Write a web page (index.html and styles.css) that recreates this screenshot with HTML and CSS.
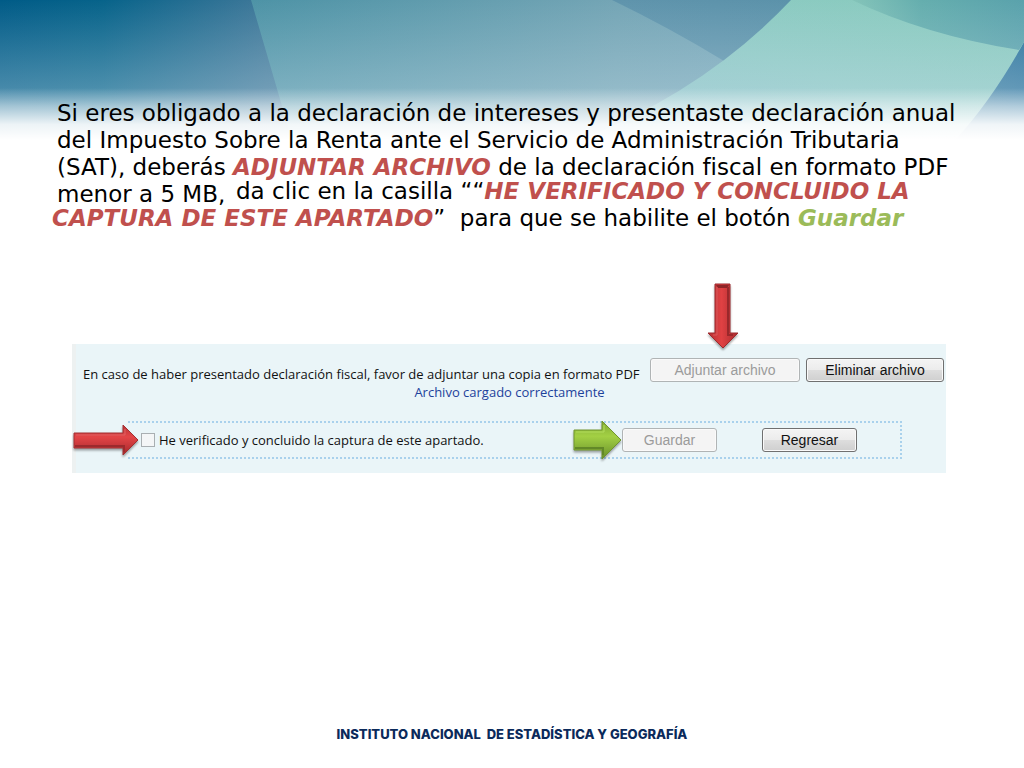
FILE: index.html
```
<!DOCTYPE html>
<html lang="es">
<head>
    <meta charset="UTF-8">
    <meta name="viewport" content="width=device-width, initial-scale=1.0">
    <title>Declaración de intereses - Adjuntar archivo</title>
    <link rel="stylesheet" href="styles.css">
</head>
<body>
    <!-- Header background -->
    <svg class="banner" viewBox="0 0 1024 140" preserveAspectRatio="none" aria-hidden="true">
        <defs>
            <linearGradient id="base" x1="0" y1="0" x2="1" y2="0">
                <stop offset="0" stop-color="#005b87"/>
                <stop offset="0.1" stop-color="#07638a"/>
                <stop offset="0.26" stop-color="#3f7899"/>
                <stop offset="0.6" stop-color="#5f94ac"/>
                <stop offset="0.8" stop-color="#5b92aa"/>
                <stop offset="1" stop-color="#28719b"/>
            </linearGradient>
            <linearGradient id="middle" x1="0" y1="0" x2="1" y2="0">
                <stop offset="0" stop-color="#4d93a6"/>
                <stop offset="0.6" stop-color="#74a5b5"/>
                <stop offset="1" stop-color="#7ba9bc"/>
            </linearGradient>
            <linearGradient id="green" x1="0" y1="1" x2="1" y2="0">
                <stop offset="0" stop-color="#8bbfca"/>
                <stop offset="0.5" stop-color="#8dcac4"/>
                <stop offset="1" stop-color="#89cbbd"/>
            </linearGradient>
            <linearGradient id="corner" x1="0" y1="0" x2="1" y2="0">
                <stop offset="0" stop-color="#84c4b9"/>
                <stop offset="0.4" stop-color="#65aeae"/>
                <stop offset="1" stop-color="#5aa2ac"/>
            </linearGradient>
            <linearGradient id="light" x1="0" y1="0" x2="0" y2="1">
                <stop offset="0" stop-color="#cfe3ee" stop-opacity="0"/>
                <stop offset="0.65" stop-color="#cfe3ee" stop-opacity="0.35"/>
                <stop offset="1" stop-color="#cfe3ee" stop-opacity="0.35"/>
            </linearGradient>
            <linearGradient id="fade" x1="0" y1="0" x2="0" y2="1">
                <stop offset="0" stop-color="#fff" stop-opacity="0"/>
                <stop offset="0.35" stop-color="#fff" stop-opacity="0.5"/>
                <stop offset="0.7" stop-color="#fff" stop-opacity="0.9"/>
                <stop offset="1" stop-color="#fff"/>
            </linearGradient>
        </defs>
        <rect width="1024" height="140" fill="url(#base)"/>
        <path d="M251 0H612Q670 28 724 61L860 140H292Z" fill="url(#middle)"/>
        <path d="M791 0H1024V42Q992 100 955 140H580Q706 90 791 0Z" fill="url(#green)"/>
        <path d="M852 0H1024V42L1019 50Q925 35 852 0Z" fill="url(#corner)"/>
        <rect width="1024" height="140" fill="url(#light)"/>
        <rect y="88" width="1024" height="52" fill="url(#fade)"/>
    </svg>

    <main>
        <div class="instructions">
            <p>Si eres obligado a la declaración de intereses y presentaste declaración anual<br>
            del Impuesto Sobre la Renta ante el Servicio de Administración Tributaria<br>
            (SAT), deberás <em class="red">ADJUNTAR ARCHIVO</em> de la declaración fiscal en formato PDF<br>
            menor a 5 MB,</p>
            <p class="second">da clic en la casilla ““<em class="red">HE VERIFICADO Y CONCLUIDO LA<br>
            CAPTURA DE ESTE APARTADO</em>”&nbsp; para que se habilite el botón <em class="green">Guardar</em></p>
        </div>

        <form class="panel">
            <div class="upload">
                <div class="upload-text">
                    <span>En caso de haber presentado declaración fiscal, favor de adjuntar una copia en formato PDF</span>
                    <span class="status">Archivo cargado correctamente</span>
                </div>
                <div class="upload-buttons">
                    <div class="attach">
                        <button type="button" class="wide" disabled>Adjuntar archivo</button>
                        <svg class="arrow-down" width="36" height="70" viewBox="0 0 36 70" aria-hidden="true">
                            <defs>
                                <linearGradient id="red-v" x1="0" y1="0" x2="1" y2="0">
                                    <stop offset="0" stop-color="#b52f31"/>
                                    <stop offset="0.45" stop-color="#e04143"/>
                                    <stop offset="1" stop-color="#a92b2e"/>
                                </linearGradient>
                            </defs>
                            <path d="M10 2H25V51H33L18 66L3 51H10Z" fill="url(#red-v)" stroke="#9d2b2e"/>
                            <path d="M11 3H24L22 6H13Z" fill="#8e2528"/>
                            <path d="M12 5V53H8" fill="none" stroke="#d8595b"/>
                            <path d="M23 5V53H28" fill="none" stroke="#9a282b" stroke-width="2"/>
                        </svg>
                    </div>
                    <button type="button" class="wide delete">Eliminar archivo</button>
                </div>
            </div>

            <div class="confirm">
                <svg class="arrow-red" width="68" height="36" viewBox="0 0 68 36" aria-hidden="true">
                    <defs>
                        <linearGradient id="red-h" x1="0" y1="0" x2="0" y2="1">
                            <stop offset="0" stop-color="#b93436"/>
                            <stop offset="0.4" stop-color="#e34547"/>
                            <stop offset="1" stop-color="#a5282b"/>
                        </linearGradient>
                    </defs>
                    <path d="M1 10H50V2L65 17L50 32V25H1Z" fill="url(#red-h)" stroke="#a23033"/>
                    <path d="M3 12H52V6" fill="none" stroke="#e06163"/>
                    <path d="M2 23H51V29" fill="none" stroke="#9c2a2d" stroke-width="2"/>
                </svg>
                <input type="checkbox" id="verified">
                <label for="verified">He verificado y concluido la captura de este apartado.</label>
                <div class="actions">
                    <svg class="arrow-green" width="52" height="44" viewBox="0 0 52 44" aria-hidden="true">
                        <defs>
                            <linearGradient id="green-h" x1="0" y1="0" x2="0" y2="1">
                                <stop offset="0" stop-color="#7fa832"/>
                                <stop offset="0.4" stop-color="#a3d044"/>
                                <stop offset="1" stop-color="#68902a"/>
                            </linearGradient>
                        </defs>
                        <path d="M2 12H30V3L49 22L30 41V32H2Z" fill="url(#green-h)" stroke="#71952f"/>
                        <path d="M4 14H32V7" fill="none" stroke="#b2dc5c"/>
                        <path d="M3 30H31V37" fill="none" stroke="#628828" stroke-width="2"/>
                    </svg>
                    <button type="button" disabled>Guardar</button>
                    <button type="button">Regresar</button>
                </div>
            </div>
        </form>
    </main>

    <footer>INSTITUTO NACIONAL&nbsp; DE ESTADÍSTICA Y GEOGRAFÍA</footer>
</body>
</html>
```

FILE: styles.css
```
html, body {
    margin: 0;
    padding: 0;
}
body {
    position: relative;
    display: flex;
    flex-direction: column;
    min-height: 100vh;
    background: #fff;
    font-family: "Liberation Sans", Arial, sans-serif;
}
.banner {
    position: absolute;
    top: 0;
    left: 0;
    width: 100%;
    height: 140px;
}
main {
    position: relative;
    padding: 100px 78px 0 72px;
}
.instructions {
    margin: 0 -60px 112px -20px;
    font-family: Verdana, "DejaVu Sans", sans-serif;
    font-size: 23px;
    line-height: 27px;
    color: #000;
    white-space: nowrap;
}
.instructions p {
    margin: 0 0 0 5px;
}
/* The second text starts beside the last line of the first */
.instructions .second {
    margin: -30px 0 0;
    text-indent: 184px;
}
.instructions em {
    font-weight: bold;
}
.red {
    color: #c0504d;
}
.green {
    color: #9bbb59;
}

/* Form */
.panel {
    box-sizing: border-box;
    height: 129px;
    background: #eaf5f8;
    border-left: 4px solid #edf1f1;
}
.upload {
    display: flex;
    justify-content: space-between;
    padding: 14px 2px 0 7px;
}
.upload-text {
    display: flex;
    flex-direction: column;
    padding-top: 7px;
    font-family: "Open Sans", sans-serif;
    font-size: 13px;
    line-height: 18px;
    color: #111;
    white-space: nowrap;
}
.upload-text .status {
    align-self: flex-end;
    margin-right: 35px;
    color: #1d429b;
}
.upload-buttons {
    display: flex;
    align-items: flex-start;
    gap: 6px;
}
.attach {
    position: relative;
}
button {
    box-sizing: border-box;
    width: 95px;
    height: 24px;
    padding: 0;
    border: 1px solid #707070;
    border-radius: 3px;
    background: linear-gradient(#f4f4f4 0%, #ececec 48%, #dddddd 52%, #cfcfcf 100%);
    box-shadow: inset 0 0 0 1px #fafafa;
    font-family: inherit;
    font-size: 14px;
    color: #111;
}
button:disabled {
    border-color: #b0b4b5;
    background: #f4f4f4;
    color: #9b9b9b;
}
button.wide {
    width: 150px;
}
button.delete {
    width: 138px;
}
.confirm {
    position: relative;
    display: flex;
    align-items: center;
    box-sizing: border-box;
    height: 38px;
    margin: 20px 44px 0 52px;
    padding-left: 13px;
    border: 2px dotted #a9d1ec;
    border-left: none;
    font-size: 13px;
    color: #111;
}
.confirm input {
    appearance: none;
    width: 14px;
    height: 14px;
    margin: 0 4px 0 0;
    border: 1px solid #a9afb2;
    background: #f4f6f7;
}
.confirm label {
    font-family: "Open Sans", sans-serif;
    white-space: nowrap;
}
.actions {
    position: relative;
    display: flex;
    gap: 45px;
    margin-left: auto;
    padding-right: 43px;
}

/* Arrows laid over the form */
.arrow-down,
.arrow-red,
.arrow-green {
    position: absolute;
    filter: drop-shadow(0 2px 1px rgba(0, 0, 0, 0.35));
}
.arrow-down {
    left: 55px;
    bottom: 30px;
}
.arrow-red {
    left: -55px;
    top: 0;
}
.arrow-green {
    left: -50px;
    top: -10px;
}

footer {
    margin-top: auto;
    padding-bottom: 26px;
    font-family: Inter, sans-serif;
    font-size: 13px;
    font-weight: 800;
    line-height: 16px;
    text-align: center;
    color: #0b2a5b;
}
```
